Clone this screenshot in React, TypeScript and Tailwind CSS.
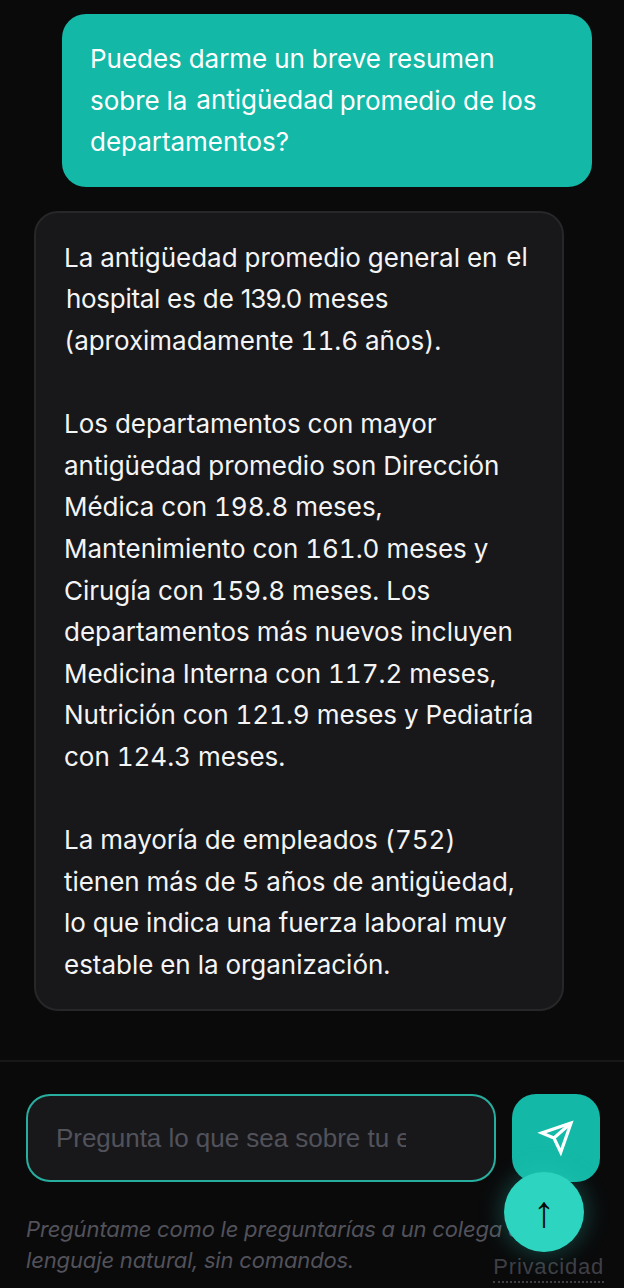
const font = "font-['Inter','Liberation_Sans',sans-serif]";

function SendIcon() {
  return (
    <svg width="38" height="38" viewBox="0 0 24 24" fill="none" stroke="white" strokeWidth="2" strokeLinejoin="miter">
      <path d="M21.5 2.5 3 8.8l7.7 3.2L15 21z" />
      <path d="M21.5 2.5 10.7 12" />
    </svg>
  );
}

export default function App() {
  return (
    <div className={`relative h-[1288px] w-[624px] overflow-hidden bg-[#0a0a0b] flex flex-col tabular-nums tracking-[-0.03px] ${font}`}>
      <div className="flex-1 flex flex-col pt-[14px] pl-[34px] pr-[32px] gap-[24px]">
        <div className="self-end w-[530px] rounded-[24px] bg-[#14b8a6] px-[28px] py-[24px] text-[26px] leading-[41.6px] text-white">
          Puedes darme un breve resumen sobre la <span className="relative -top-px ml-[2px] mr-[-1px]">antigüedad</span> promedio de los departamentos?
        </div>
        <div className="w-[530px] rounded-[24px] border-2 border-[#27272a] bg-[#18181b] px-[28px] py-[24px] text-[26px] leading-[41.6px] text-[#f4f4f5]">
          <p>
            La antigüedad promedio general en <span className="relative -top-px ml-[2px]">el</span>{" "}
            <span className="ml-[2px] tracking-[-0.3px]">hospital</span> es de <span className="proportional-nums tracking-[-1px]">139.0</span> meses (aproximadamente 11.6 años).
          </p>
          <p className="mt-[41.6px]">
            Los departamentos con mayor antigüedad promedio son Dirección Médica con 198.8 meses, Mantenimiento con 161.0 meses y Cirugía con 159.8 meses. Los departamentos más nuevos incluyen Medicina Interna con 117.2 meses, Nutrición con 121.9 meses y Pediatría con 124.3 meses.
          </p>
          <p className="mt-[41.6px]">
            La mayoría de empleados (752) tienen más de 5 años de antigüedad, lo que indica una fuerza laboral muy estable en la organización.
          </p>
        </div>
      </div>

      <div className="h-[228px] border-t-2 border-[#18181b] pl-[26px] pr-[24px] pt-[32px]">
        <div className="flex gap-[16px]">
          <input
            readOnly
            placeholder="Pregunta lo que sea sobre tu equipo"
            className="h-[88px] w-[470px] rounded-[24px] border-2 border-[#2dd4bf]/80 bg-[#18181b] pl-[28px] pr-[88px] font-['Liberation_Sans',sans-serif] text-[26px] outline-none placeholder:text-[#52525b]"
          />
          <button className="flex h-[88px] w-[88px] items-center justify-center rounded-[24px] bg-[#14b8a6]">
            <SendIcon />
          </button>
        </div>
        <p className="mt-[32px] w-[560px] text-[22px] italic leading-[30.8px] tracking-[-0.13px] text-[#52525b]">
          Pregúntame como le preguntarías a un colega en lenguaje natural, sin comandos.
        </p>
      </div>

      <span className="absolute right-[20px] bottom-[5px] border-b-2 border-dotted border-[#3f3f46] font-['Liberation_Sans',sans-serif] text-[22px] leading-[28px] tracking-[0.8px] text-[#3f3f46]">
        Privacidad
      </span>
      <div className="absolute left-[504px] top-[1172px] flex h-[80px] w-[80px] items-center justify-center rounded-full bg-[#2dd4bf] font-['Liberation_Sans',sans-serif] text-[44px] text-[#0a0a0b] shadow-[0_0_24px_rgba(45,212,191,0.35)]">
        ↑
      </div>
    </div>
  );
}
